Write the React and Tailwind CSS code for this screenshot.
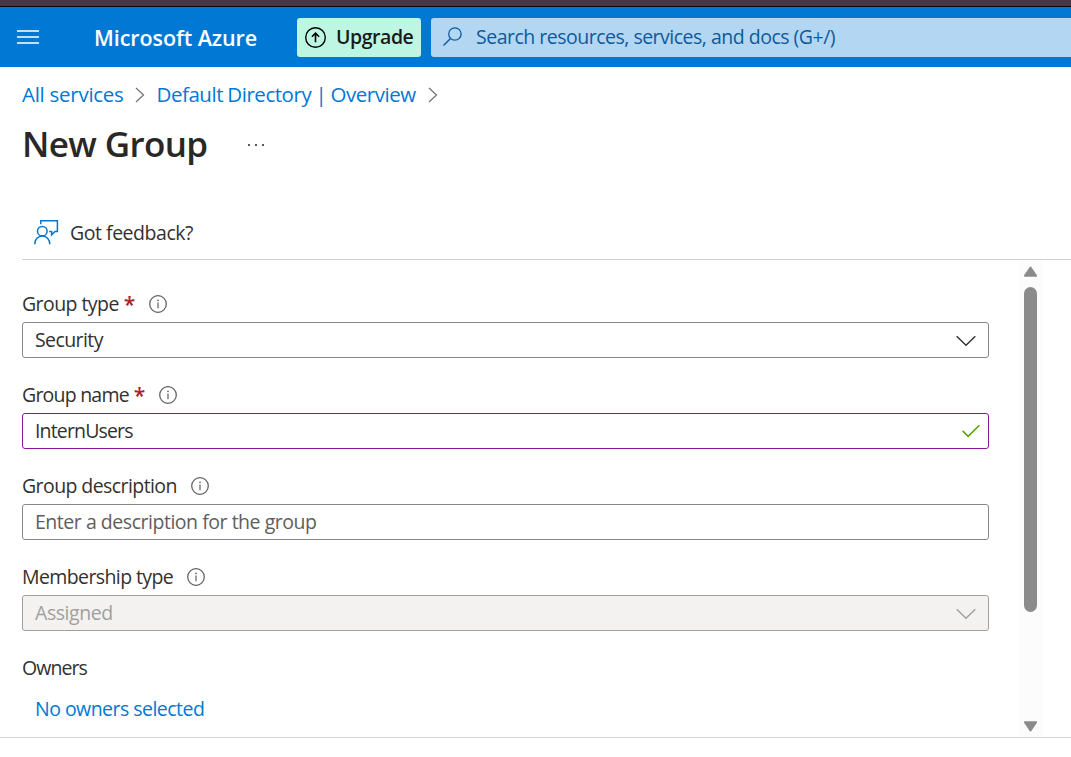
import React from "react";

function InfoIcon() {
  return (
    <svg width="18" height="18" viewBox="0 0 18 18" fill="none" className="shrink-0">
      <circle cx="9" cy="9" r="8.3" stroke="#605e5c" strokeWidth="1.25" />
      <path d="M9 7.4v5.8" stroke="#605e5c" strokeWidth="1.2" />
      <circle cx="9" cy="5.3" r="0.85" fill="#605e5c" />
    </svg>
  );
}

function Chevron({ className }) {
  return (
    <svg width="20" height="12" viewBox="0 0 20 12" fill="none" className={className}>
      <path d="M0.7 1.2 10 10.3 19.3 1.2" stroke="currentColor" strokeWidth="1.4" />
    </svg>
  );
}

function Crumb() {
  return (
    <svg width="10" height="16" viewBox="0 0 10 16" fill="none" className="shrink-0">
      <path d="M1 1 8.5 8 1 15" stroke="#767472" strokeWidth="1.25" />
    </svg>
  );
}

function Field({ label, labelClass, required, boxClass, valueClass, value, icon }) {
  return (
    <div className="mb-[19px]">
      <div className="flex h-9 items-center">
        <span className={labelClass}>{label}</span>
        {required && <span className="ml-[5px] w-[9px] text-[21px] font-semibold text-[#a4262c]">*</span>}
        <span className={required ? "ml-[16.5px] flex" : "ml-[14px] flex"}>
          <InfoIcon />
        </span>
      </div>
      <div className={`flex h-9 w-[967px] items-center justify-between rounded-[3px] border pl-3 ${boxClass}`}>
        <span className={valueClass}>{value}</span>
        {icon}
      </div>
    </div>
  );
}

export default function App() {
  return (
    <div className="flex h-[757px] w-full flex-col overflow-hidden bg-white font-['Open_Sans','Noto_Sans',sans-serif] text-[19.5px] leading-6 whitespace-nowrap text-[#323130]">
      <div className="h-[7px] shrink-0 border-b border-[#0b0b0c] bg-[#4b3541]" />
      <header className="flex h-[60px] shrink-0 items-center bg-[#0078d4]">
        <svg width="22" height="14" viewBox="0 0 22 14" className="ml-[17px] shrink-0">
          <path d="M0 1h22M0 7h22M0 13h22" stroke="#c3dff5" strokeWidth="1.8" />
        </svg>
        <span className="ml-[55px] w-[203px] pt-px text-[21.5px] font-semibold tracking-[-0.07px] text-white">Microsoft Azure</span>
        <div className="flex h-[39px] w-[124px] shrink-0 items-center rounded-[3px] bg-[#bdf6e2] pl-2 text-[#1b1a19]">
          <svg width="21" height="21" viewBox="0 0 21 21" fill="none" stroke="#000" className="shrink-0">
            <circle cx="10.5" cy="10.5" r="9.8" strokeWidth="1.4" />
            <path d="M10.5 15.3V6.3M6.9 9.7l3.6-3.6 3.6 3.6" strokeWidth="1.6" />
          </svg>
          <span className="ml-[10px] font-semibold tracking-[-0.45px]">Upgrade</span>
        </div>
        <div className="ml-[10px] flex h-[39px] grow items-center rounded-l-[3px] bg-[#b3d6f2] pl-3 text-[#0f5a9c]">
          <svg width="19" height="19" viewBox="0 0 19 19" fill="none" className="mt-[-2px] shrink-0" stroke="currentColor">
            <circle cx="11.9" cy="7" r="6.2" strokeWidth="1.3" />
            <path d="M7.5 11.4.5 18.4" strokeWidth="1.4" />
          </svg>
          <span className="ml-[14px] tracking-[-0.5px]">Search resources, services, and docs (G+/)</span>
        </div>
      </header>
      <nav className="flex h-[55px] shrink-0 items-center pl-[22px] text-[20.5px] text-[#0078d4]">
        <span className="w-[113px] pb-px tracking-[-0.27px]">All services</span>
        <Crumb />
        <span className="ml-[11.5px] w-[271.5px] pb-px tracking-[-0.45px] [word-spacing:-0.7px]">Default Directory | Overview</span>
        <Crumb />
      </nav>
      <div className="flex h-[46px] shrink-0 items-center pl-[22px]">
        <h1 className="w-[225px] pb-[2px] text-[35px] leading-[44px] font-semibold tracking-[-0.63px] text-[#292827]">New Group</h1>
        <svg width="18" height="4" viewBox="0 0 18 4" fill="#323130">
          <circle cx="2" cy="2" r="1.1" />
          <circle cx="9" cy="2" r="1.1" />
          <circle cx="16" cy="2" r="1.1" />
        </svg>
      </div>
      <div className="mt-[38px] ml-[22px] flex h-[54px] shrink-0 items-center border-b border-[#d2d0ce] pl-3">
        <svg width="25" height="25" viewBox="0 0 25 25" fill="none" stroke="#0078d4" strokeWidth="1.5" className="shrink-0">
          <path d="M6.8 4.2V.8h16.6v10.7h-2.4l-3.4 3.4v-3.4h-2.4" />
          <circle cx="8.3" cy="11.2" r="4.8" />
          <path d="M.8 24.3c0-5 3.2-8.3 7.5-8.3s7.5 3.3 7.5 8.3" />
        </svg>
        <span className="ml-[11px] tracking-[-0.47px]">Got feedback?</span>
      </div>
      <main className="flex h-[478px] shrink-0 border-b border-[#d8d6d4]">
        <div className="w-[1019px] shrink-0 pt-[26px] pl-[22px]">
          <Field label="Group type" labelClass="tracking-[-0.56px]" required boxClass="border-[#8a8886]" value="Security" valueClass="tracking-[-0.58px]" icon={<Chevron className="mt-[2px] mr-[12px] text-[#323130]" />} />
          <Field label="Group name" labelClass="tracking-[-0.78px]" required boxClass="border-[#881798]" value="InternUsers" valueClass="tracking-[-0.85px]"
            icon={
              <svg width="18" height="14" viewBox="0 0 18 14" fill="none" className="mr-[8px]">
                <path d="M.6 6.9 6.2 12.4 17.4 1.2" stroke="#57a300" strokeWidth="1.5" />
              </svg>
            }
          />
          <Field label="Group description" labelClass="tracking-[-0.58px]" boxClass="border-[#8a8886]" value="Enter a description for the group" valueClass="text-[#605e5c] tracking-[-0.47px]" />
          <Field label="Membership type" labelClass="tracking-[-0.6px]" boxClass="border-[#a19f9d] bg-[#f3f2f1]" value="Assigned" valueClass="text-[#a19f9d] tracking-[-0.44px]" icon={<Chevron className="mt-[2px] mr-[12px] text-[#a19f9d]" />} />
          <div className="flex h-9 items-center tracking-[-0.95px]">Owners</div>
          <div className="flex h-[46px] items-center pl-[13px] tracking-[-0.53px] text-[#0078d4]">No owners selected</div>
        </div>
        <div className="flex w-[23px] flex-col items-center bg-[#fcfcfc] pt-[6px] pb-[5px]">
          <svg width="15" height="12" viewBox="0 0 15 12">
            <path d="M7.5 1.5 13.1 9.8H1.9Z" fill="#8b8b8b" stroke="#8b8b8b" strokeWidth="2" strokeLinejoin="round" />
          </svg>
          <div className="mt-[9px] h-[325px] w-[13px] rounded-full bg-[#8b8b8b]" />
          <svg width="15" height="12" viewBox="0 0 15 12" className="mt-auto">
            <path d="M7.5 10.5 13.1 2.2H1.9Z" fill="#8b8b8b" stroke="#8b8b8b" strokeWidth="2" strokeLinejoin="round" />
          </svg>
        </div>
      </main>
    </div>
  );
}
